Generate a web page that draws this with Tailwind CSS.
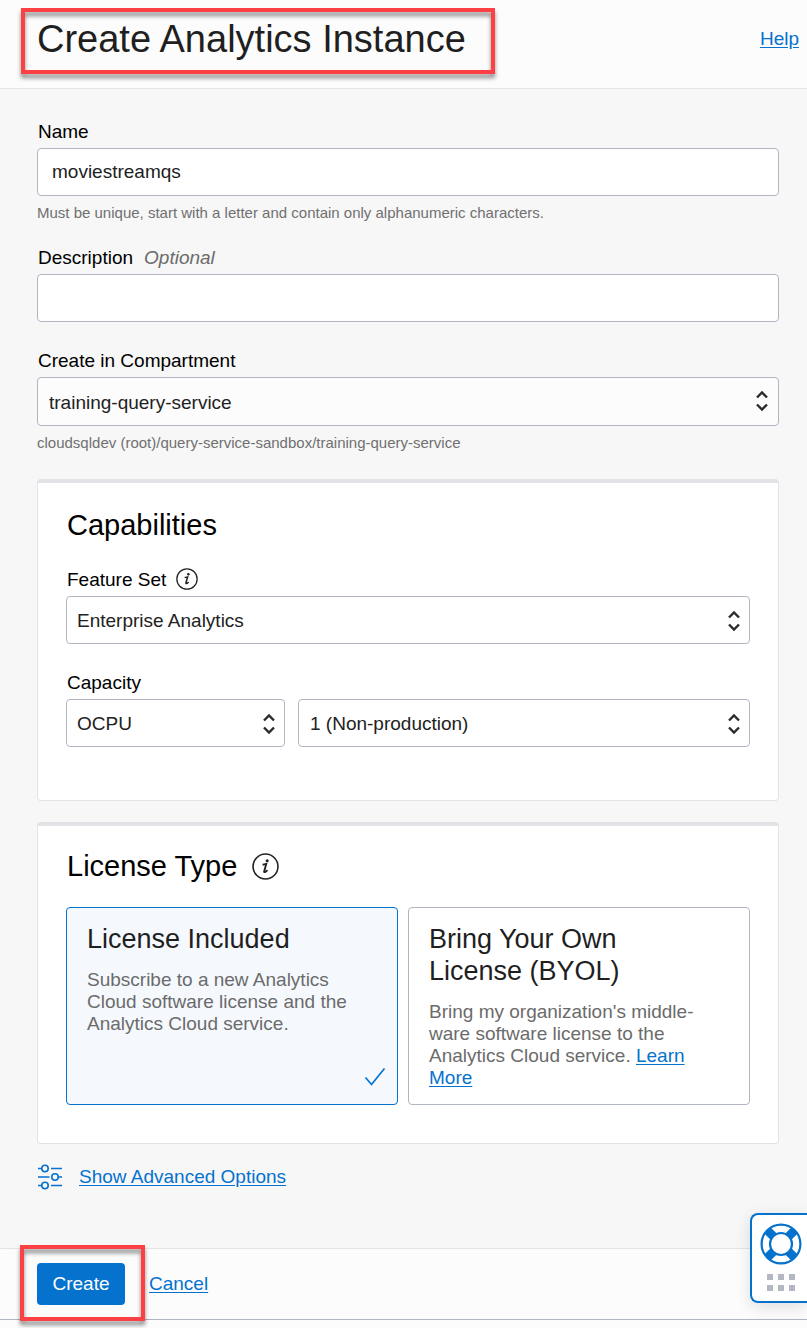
<!DOCTYPE html>
<html lang="en">
<head>
<meta charset="utf-8">
<meta name="viewport" content="width=device-width, initial-scale=1">
<title>Create Analytics Instance</title>
<script src="https://cdn.jsdelivr.net/npm/@tailwindcss/browser@4"></script>
</head>
<body class="relative flex min-h-screen flex-col bg-[#f7f7f7] font-['Liberation_Sans',Arial,sans-serif] text-[19px] leading-6 text-black">
<svg class="hidden">
  <symbol id="updown" viewBox="0 0 14 22"><path d="M2 7.500 7 2.500l5 5M2 14.500l5 5 5-5" fill="none" stroke="#2b2b2b" stroke-width="2.400"/></symbol>
  <symbol id="info" viewBox="0 0 26 26"><circle cx="13" cy="13" r="12" fill="none" stroke="#222" stroke-width="1.500"/><circle cx="14.600" cy="7.400" r="1.500" fill="#222"/><path d="M10.200 11.300c1.200-.1 2.300-.4 3.500-.8l-2 7.200c-.3 1.200 1.200 1 3.200-1.200" fill="none" stroke="#222" stroke-width="1.800"/></symbol>
</svg>

<header class="flex items-start justify-between border-b border-[#e4e4e6] bg-[#fcfcfc] pt-[17px] pr-2 pb-[27px] pl-[37px]">
  <h1 class="relative text-[38px] leading-[44px] text-[#1f1f1f]">Create Analytics Instance
    <span class="pointer-events-none absolute -top-[9px] -right-[29px] -bottom-[13px] -left-4 border-4 border-[#fc4044] drop-shadow-[0_4px_2px_rgba(0,0,0,0.45)]"></span>
  </h1>
  <a href="#" class="mt-[10px] text-[#0572ce] underline underline-offset-2">Help</a>
</header>

<main class="flex-1 pt-[31px] pr-7 pb-[57px] pl-[37px]">
  <div>
    <label for="name" class="mb-1 block pl-px">Name</label>
    <input id="name" type="text" value="moviestreamqs" class="block h-12 w-full rounded-[4px] border border-[#afb6c1] bg-white px-[14px] text-[#222]">
    <p class="mt-[7px] text-[15px] leading-5 text-[#707070]">Must be unique, start with a letter and contain only alphanumeric characters.</p>
  </div>
  <div class="mt-[23px]">
    <label for="description" class="mb-1 flex gap-[11px] pl-px">Description <em class="text-[#6b6b6b]">Optional</em></label>
    <input id="description" type="text" class="block h-12 w-full rounded-[4px] border border-[#afb6c1] bg-white px-[14px] text-[#222]">
  </div>
  <div class="mt-[27px]">
    <label for="compartment" class="mb-1 block pl-px">Create in Compartment</label>
    <div class="relative">
      <select id="compartment" class="block h-[49px] w-full appearance-none rounded-[4px] border border-[#afb6c1] bg-[#fcfcfc] pt-0.5 pr-9 pl-[11px] text-[#222]"><option>training-query-service</option></select>
      <svg class="pointer-events-none absolute top-[13px] right-[10px] h-[22px] w-[14px]"><use href="#updown"/></svg>
    </div>
    <p class="mt-[7px] text-[15px] leading-5 text-[#707070]">cloudsqldev (root)/query-service-sandbox/training-query-service</p>
  </div>

  <section class="mt-[26px] rounded-[4px] border border-t-4 border-[#e2e3e7] bg-white px-7 pt-6 pb-[53px]">
    <h2 class="pl-px text-[29px] leading-9">Capabilities</h2>
    <div class="mt-[25px] mb-1 flex items-start gap-[10px] pl-px">
      <label for="feature">Feature Set</label>
      <svg class="size-[22px]" role="img" aria-label="Feature set information"><use href="#info"/></svg>
    </div>
    <div class="relative">
      <select id="feature" class="block h-12 w-full appearance-none rounded-[4px] border border-[#afb6c1] bg-white pt-0.5 pr-9 pl-[10px] text-[#222]"><option>Enterprise Analytics</option></select>
      <svg class="pointer-events-none absolute top-[14px] right-[9px] h-[22px] w-[14px]"><use href="#updown"/></svg>
    </div>
    <label for="capacity" class="mt-[27px] mb-1 block pl-px">Capacity</label>
    <div class="grid grid-cols-[219fr_452fr] gap-[13px]">
      <div class="relative">
        <select id="capacity" class="block h-12 w-full appearance-none rounded-[4px] border border-[#afb6c1] bg-white pt-0.5 pr-9 pl-[10px] text-[#222]"><option>OCPU</option></select>
        <svg class="pointer-events-none absolute top-[14px] right-[9px] h-[22px] w-[14px]"><use href="#updown"/></svg>
      </div>
      <div class="relative">
        <select aria-label="Capacity amount" class="block h-12 w-full appearance-none rounded-[4px] border border-[#afb6c1] bg-white pt-0.5 pr-9 pl-[11px] text-[#222]"><option>1 (Non-production)</option></select>
        <svg class="pointer-events-none absolute top-[14px] right-[9px] h-[22px] w-[14px]"><use href="#updown"/></svg>
      </div>
    </div>
  </section>

  <section class="mt-[21px] rounded-[4px] border border-t-4 border-[#e2e3e7] bg-white px-7 pt-[22px] pb-[38px]">
    <h2 class="flex items-center gap-[15px] pl-px text-[29px] leading-9">License Type
      <svg class="size-[27px]" role="img" aria-label="License type information"><use href="#info"/></svg>
    </h2>
    <div class="mt-[23px] grid grid-cols-[332fr_342fr] gap-[10px]">
      <label class="relative rounded-[4px] border border-[#0572ce] bg-[#f5f9fe] px-5 py-[15px]">
        <input type="radio" name="license" checked class="sr-only">
        <span class="block text-[27px] leading-8 text-[#1f1f1f]">License Included</span>
        <span class="mt-[14px] block leading-[22px] text-[#6b6b6b]">Subscribe to a new Analytics Cloud software license and the Analytics Cloud service.</span>
        <svg class="absolute right-[11px] bottom-[17px] h-5 w-[22px]" viewBox="0 0 22 20" fill="none" stroke="#0572ce" stroke-width="1.700"><path d="m1.500 10.500 6 7L20.500 1.500"/></svg>
      </label>
      <label class="rounded-[4px] border border-[#afb6c1] bg-white py-[15px] pr-10 pl-5">
        <input type="radio" name="license" class="sr-only">
        <span class="block text-[27px] leading-8 text-[#1f1f1f]">Bring Your Own License (BYOL)</span>
        <span class="mt-[14px] block leading-[22px] text-[#6b6b6b]">Bring my organization's middle-ware software license to the Analytics Cloud service. <a href="#" class="text-[#0572ce] underline underline-offset-2">Learn More</a></span>
      </label>
    </div>
  </section>

  <a href="#" class="mt-5 flex w-fit items-center gap-4 text-[#0572ce]">
    <svg class="size-[26px]" viewBox="0 0 26 26" fill="none" stroke="#0572ce" stroke-width="1.600"><path d="M1 4.500h3.800M14 4.500h11M1 13h11.500M21.200 13H25M1 21.500h3.800M14 21.500h11"/><circle cx="8" cy="4.500" r="3.200"/><circle cx="18" cy="13" r="3.200"/><circle cx="8" cy="21.500" r="3.200"/></svg>
    <span class="underline underline-offset-2">Show Advanced Options</span>
  </a>
</main>

<footer class="border-t border-[#e4e4e6] bg-[#fcfcfc] pb-2">
  <div class="flex items-center gap-6 border-b border-[#afb6c1] pt-[14px] pb-[14px] pl-[37px]">
    <div class="relative">
      <button type="button" class="block h-[42px] w-[88px] rounded-[4px] bg-[#0572ce] text-white">Create</button>
      <span class="pointer-events-none absolute -top-[18px] -right-5 -bottom-4 -left-[17px] border-4 border-[#fc4044] drop-shadow-[0_4px_2px_rgba(0,0,0,0.45)]"></span>
    </div>
    <a href="#" class="text-[#0572ce] underline underline-offset-2">Cancel</a>
  </div>
</footer>

<button type="button" aria-label="Support" class="absolute right-0 bottom-[25px] flex h-[90px] w-[57px] flex-col items-center rounded-l-[8px] border-2 border-r-0 border-[#0572ce] bg-white pt-2 pr-px pl-1 shadow-[0_4px_16px_rgba(0,0,0,0.12)]">
  <svg class="size-[42px] shrink-0" viewBox="0 0 42 42" fill="none" stroke="#0572ce">
    <path d="M7.600 7.600l5.800 5.800M28.600 28.600l5.800 5.800M34.400 7.600l-5.800 5.800M13.400 28.600l-5.800 5.800" stroke-width="8.600"/>
    <circle cx="21" cy="21" r="19.400" stroke-width="2.200"/>
    <circle cx="21" cy="21" r="11" stroke-width="2.200"/>
  </svg>
  <svg class="mt-[8px] h-[18px] w-[28px] shrink-0" viewBox="0 0 28 18" fill="#b3b8c2"><path d="M0 1h6v6H0zM11 1h6v6h-6zM22 1h6v6h-6zM0 12h6v6H0zM11 12h6v6h-6zM22 12h6v6h-6z"/></svg>
</button>
</body>
</html>
